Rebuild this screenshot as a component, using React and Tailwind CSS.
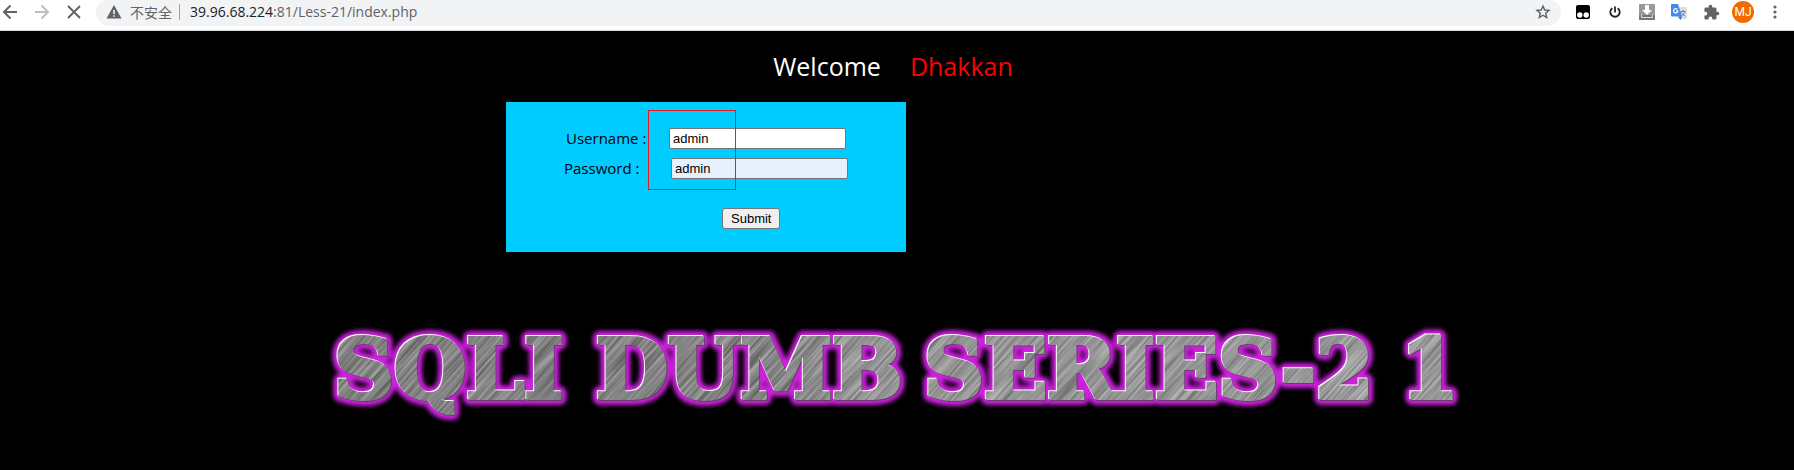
import React from 'react';

const ICON_CELL = 'flex h-6 w-8 shrink-0 items-center justify-center';

function Toolbar() {
  return (
    <header className="flex h-[31px] items-start border-b border-[#d5d7da] bg-white text-[#5f6368]">
      <nav aria-label="History" className="flex h-6 w-24 shrink-0 items-center">
        <button type="button" aria-label="Back" className="flex w-8 justify-start pl-[2px]">
          <svg width="16" height="16" viewBox="0 0 16 16" fill="none" stroke="#5f6368" strokeWidth="2">
            <path d="M15 8H2.5M8.5 1.5 2 8l6.500 6.500" />
          </svg>
        </button>
        <button type="button" aria-label="Forward" className="flex w-8 justify-start pl-[2px]">
          <svg width="16" height="16" viewBox="0 0 16 16" fill="none" stroke="#bcbec1" strokeWidth="2">
            <path d="M1 8h12.500M7.500 1.500 14 8l-6.500 6.500" />
          </svg>
        </button>
        <button type="button" aria-label="Stop loading" className="flex w-8 justify-start pl-[3px]">
          <svg width="14" height="14" viewBox="0 0 14 14" fill="none" stroke="#5f6368" strokeWidth="1.900">
            <path d="M1 1l12 12M13 1 1 13" />
          </svg>
        </button>
      </nav>

      <div className="flex h-[26px] min-w-0 flex-1 items-start rounded-b-[14px] rounded-t-[12px] bg-[#f1f3f4] pl-[10px] pr-[10px]">
        <div className="flex h-6 flex-1 items-center">
          <svg width="16" height="14" viewBox="0 0 16 14" aria-hidden="true">
            <path d="M8 0 15.500 13.500H.5z" fill="#5f6368" />
            <path d="M7.200 5h1.600v4H7.200zM7.200 10.200h1.600v1.600H7.200z" fill="#f1f3f4" />
          </svg>
          <span className="ml-2 whitespace-nowrap font-['Noto_Sans_CJK_SC',sans-serif] text-[14px] leading-6">不安全</span>
          <span className="ml-[7px] h-4 w-px bg-[#9aa0a6]" />
          <p className="ml-[10px] whitespace-nowrap font-['Open_Sans','Noto_Sans',sans-serif] text-[14px] leading-6">
            <span className="text-[#202124]">39.96.68.224</span>:81/Less-21/index.php
          </p>
        </div>
        <button type="button" aria-label="Bookmark this page" className="flex h-6 items-center">
          <svg width="16" height="16" viewBox="0 0 16 16" fill="none" stroke="#5f6368" strokeWidth="1.400">
            <path d="M8 2l1.700 4 4.300.4-3.300 2.800 1 4.300L8 11.200l-3.700 2.300 1-4.300L2 6.400 6.300 6z" />
          </svg>
        </button>
      </div>

      <div className="flex h-6 w-[233px] shrink-0 items-center pl-[6px]">
        <button type="button" aria-label="Script manager" className={ICON_CELL}>
          <svg width="16" height="16" viewBox="0 0 16 16">
            <path d="M3 1h10a2 2 0 0 1 2 2v10a2 2 0 0 1-2 2H3a2 2 0 0 1-2-2V3a2 2 0 0 1 2-2z" fill="#000" />
            <circle cx="4.800" cy="11" r="2.700" fill="#fff" />
            <circle cx="11.200" cy="11" r="2.700" fill="#fff" />
          </svg>
        </button>
        <button type="button" aria-label="Power" className={ICON_CELL}>
          <svg width="12" height="12" viewBox="0 0 12 12" fill="none" stroke="#222" strokeWidth="1.800">
            <path d="M3.300 2.200a4.700 4.700 0 1 0 5.400 0M6 .5v6" />
          </svg>
        </button>
        <button type="button" aria-label="Downloads" className={ICON_CELL}>
          <svg width="16" height="16" viewBox="0 0 16 16">
            <rect width="16" height="16" rx="1" fill="#999" />
            <path d="M0 11h16v4a1 1 0 0 1-1 1H1a1 1 0 0 1-1-1z" fill="#777" />
            <path d="M6 1h4v5h3l-5 5-5-5h3z" fill="#fff" />
            <path d="M2.500 10.500v3h11v-3" fill="none" stroke="#ddd" />
          </svg>
        </button>
        <button type="button" aria-label="Translate" className={ICON_CELL}>
          <svg width="16" height="16" viewBox="0 0 16 16">
            <path d="M6 3h9a1 1 0 0 1 1 1v11H10z" fill="#dcdfe3" />
            <path d="M9.500 7.500h5M12 6v1.500M14 7.500c-.5 2-2 3.500-3.500 4.500M10.500 8.500c.8 1.500 2 3 3.800 3.700" fill="none" stroke="#607d8b" strokeWidth=".9" />
            <path d="M1 0h6l4 12.500H1a1 1 0 0 1-1-1V1a1 1 0 0 1 1-1z" fill="#4688f1" />
            <path d="M7 12.500h4L9.500 16z" fill="#3367d6" />
            <path d="M6.300 5.200A2.200 2.200 0 1 0 7 6.800H4.900" fill="none" stroke="#fff" strokeWidth="1.100" />
          </svg>
        </button>
        <button type="button" aria-label="Extensions" className={ICON_CELL}>
          <svg width="17" height="17" viewBox="0 0 24 24" fill="#5f6368">
            <path d="M20.500 11H19V7a2 2 0 0 0-2-2h-4V3.500a2.500 2.500 0 0 0-5 0V5H4a2 2 0 0 0-2 2v3.800h1.500a2.700 2.700 0 0 1 0 5.400H2V20a2 2 0 0 0 2 2h3.800v-1.500a2.700 2.700 0 0 1 5.400 0V22H17a2 2 0 0 0 2-2v-4h1.500a2.500 2.500 0 0 0 0-5z" />
          </svg>
        </button>
        <button type="button" aria-label="Profile" className={ICON_CELL}>
          <span className="flex h-[22px] w-[22px] items-center justify-center rounded-full bg-[#ef6c00] font-['Roboto',sans-serif] text-[12px] leading-none text-white">MJ</span>
        </button>
        <button type="button" aria-label="Menu" className={ICON_CELL}>
          <svg width="4" height="14" viewBox="0 0 4 14" fill="#5f6368">
            <circle cx="2" cy="2" r="1.600" />
            <circle cx="2" cy="7" r="1.600" />
            <circle cx="2" cy="12" r="1.600" />
          </svg>
        </button>
      </div>
    </header>
  );
}

function LoginForm() {
  return (
    <form
      className="relative h-[150px] w-[400px] bg-[#00ccff] pt-[26px] font-['Open_Sans','Noto_Sans',sans-serif] text-[15px] text-black"
      onSubmit={(e) => e.preventDefault()}
    >
      <div className="flex h-[21px] items-start pl-[60px]">
        <label htmlFor="uname" className="w-[103px] whitespace-nowrap leading-5">Username :</label>
        <input
          id="uname"
          type="text"
          defaultValue="admin"
          className="h-[21px] w-[177px] rounded-[2px] border border-[#767676] bg-white px-[3px] font-['Liberation_Sans',Arial,sans-serif] text-[13px] outline-none"
        />
      </div>
      <div className="mt-[9px] flex h-[21px] items-start pl-[58px]">
        <label htmlFor="passwd" className="w-[107px] whitespace-nowrap leading-5">Password :</label>
        <input
          id="passwd"
          type="text"
          defaultValue="admin"
          className="h-[21px] w-[177px] rounded-[2px] border border-[#767676] bg-[#e8f0fe] px-[3px] font-['Liberation_Sans',Arial,sans-serif] text-[13px] outline-none"
        />
      </div>
      <div className="mt-[29px] pl-[216px]">
        <button
          type="submit"
          className="block h-[21px] rounded-[3px] border border-[#767676] bg-[#efefef] px-2 font-['Liberation_Sans',Arial,sans-serif] text-[13px] leading-none"
        >
          Submit
        </button>
      </div>
      <div className="pointer-events-none absolute left-[142px] top-[8px] h-[80px] w-[88px] border border-[#ed1c24]" />
    </form>
  );
}

const WORDS = [
  { x: 31, text: 'SQLI' },
  { x: 293, text: 'DUMB' },
  { x: 621, text: 'SERIES-2' },
  { x: 1098, text: '1' },
];

function Letters() {
  return WORDS.map((w) => (
    <text key={w.text} x={w.x} y="78">{w.text}</text>
  ));
}

function Banner() {
  return (
    <svg
      viewBox="0 0 1180 110"
      role="img"
      aria-label="SQLI DUMB SERIES-21"
      className="mx-auto w-full max-w-[1180px] font-['DejaVu_Serif',serif] text-[83px] font-bold"
    >
      <defs>
        <mask id="letters" maskUnits="userSpaceOnUse" x="0" y="0" width="1180" height="110">
          <g fill="#fff" stroke="#fff" strokeWidth="4"><Letters /></g>
        </mask>
        <linearGradient id="steel">
          <stop offset="0" stopColor="#7c7c7c" />
          <stop offset=".4" stopColor="#7e7e7e" />
          <stop offset=".48" stopColor="#999" />
          <stop offset="1" stopColor="#a0a0a0" />
        </linearGradient>
        <filter id="glow" x="-5%" y="-50%" width="110%" height="200%">
          <feGaussianBlur stdDeviation="2" />
        </filter>
        <filter id="brush" x="0" y="0" width="100%" height="100%" colorInterpolationFilters="sRGB">
          <feTurbulence type="fractalNoise" baseFrequency="0.015 0.45" numOctaves="2" seed="4" />
          <feColorMatrix values="1.200 0 0 0 -.05  1.200 0 0 0 -.05  1.200 0 0 0 -.05  0 0 0 0 .4" />
        </filter>
      </defs>
      <g fill="#cc22dd" stroke="#cc22dd" strokeWidth="14" strokeLinejoin="round" filter="url(#glow)">
        <Letters />
      </g>
      <g fill="#6b3a70" stroke="#6b3a70" strokeWidth="4" transform="translate(1 1)"><Letters /></g>
      <g fill="#fff" stroke="#fff" strokeWidth="4" transform="translate(-1 -1)"><Letters /></g>
      <g mask="url(#letters)">
        <rect width="1180" height="110" fill="url(#steel)" />
        <g transform="rotate(-48 590 55)">
          <rect x="0" y="-500" width="1180" height="1110" filter="url(#brush)" />
        </g>
      </g>
    </svg>
  );
}

export default function App() {
  return (
    <div className="flex min-h-screen flex-col bg-black">
      <Toolbar />
      <main className="flex-1 pt-[15px]">
        <h1 className="flex justify-center gap-[29px] pr-2 font-['Open_Sans','Noto_Sans',sans-serif] text-[25px] font-normal leading-10 text-white">
          <span>Welcome</span>
          <span className="text-[#ff0000]">Dhakkan</span>
        </h1>
        <div className="mx-auto mt-4 max-w-[782px]">
          <LoginForm />
        </div>
        <div className="mt-[68px] pr-2">
          <Banner />
        </div>
      </main>
    </div>
  );
}
